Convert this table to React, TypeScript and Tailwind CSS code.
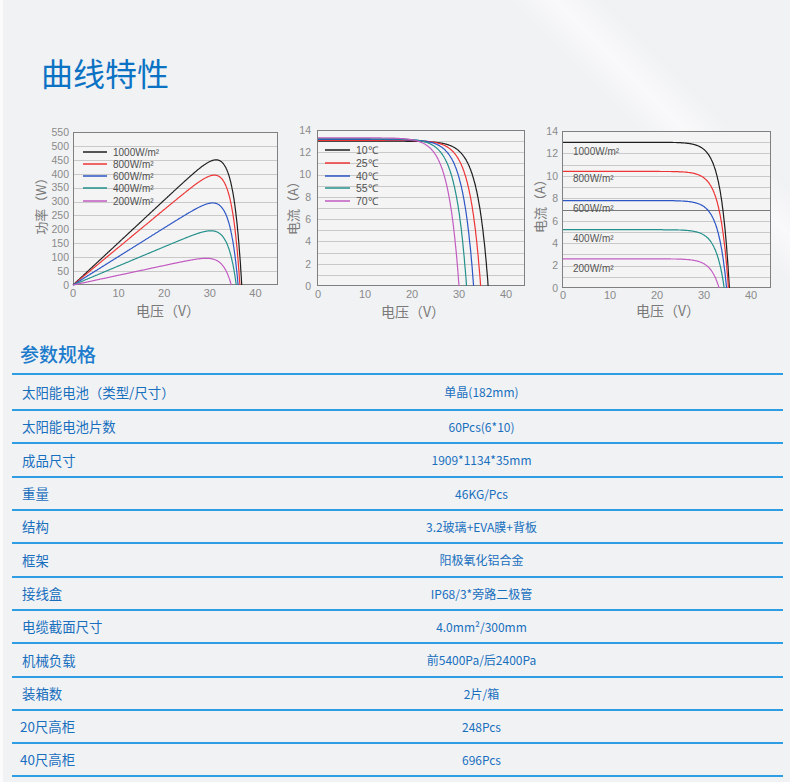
import React from "react";

// Curve characteristics + spec table for a PV module datasheet

const COLORS = ["#1f1f1f", "#ee3434", "#2c56c6", "#23908c", "#c25cc2"];
const LATIN = "'Liberation Sans', Arial, sans-serif";
const CJK = "'Noto Sans CJK SC', 'Noto Sans', sans-serif";

type Pt = [number, number];

function toPath(pts: Pt[]) {
  return pts
    .map(([x, y], i) => `${i ? "L" : "M"}${x.toFixed(1)} ${y.toFixed(1)}`)
    .join("");
}

// diode-like falloff near open-circuit voltage
function ivCurve(isc: number, voc: number, a: number, x0: number, per10: number, y0: number, perA: number) {
  const pts: Pt[] = [];
  const norm = 1 - Math.exp(-voc / a);
  for (let v = 0; v <= voc + 0.001; v += 0.1) {
    const i = (isc * (1 - Math.exp((v - voc) / a))) / norm;
    pts.push([x0 + (v * per10) / 10, y0 - Math.max(i, 0) * perA]);
  }
  return toPath(pts);
}

function pvCurve(peak: number, voc: number, a: number) {
  const raw = (v: number) => v * (1 - Math.exp((v - voc) / a));
  let max = 0;
  for (let v = 0; v <= voc; v += 0.05) max = Math.max(max, raw(v));
  const k = peak / max;
  const pts: Pt[] = [];
  for (let v = 0; v <= voc + 0.001; v += 0.1) {
    const p = Math.max(k * raw(v), 0);
    pts.push([73 + v * 4.56, 285 - (p * 153) / 550]);
  }
  return toPath(pts);
}

function Frame({
  l,
  r,
  t,
  b,
  grid,
  dark,
}: {
  l: number;
  r: number;
  t: number;
  b: number;
  grid: number[];
  dark?: number;
}) {
  return (
    <g shapeRendering="crispEdges">
      <rect x={l} y={t} width={r - l} height={b - t} fill="#f4f4f4" />
      {grid.map((y) => (
        <line
          key={y}
          x1={l}
          x2={r}
          y1={Math.round(y) + 0.5}
          y2={Math.round(y) + 0.5}
          stroke={y === dark ? "#7a7a7a" : "#c9c9c9"}
          strokeWidth={1}
        />
      ))}
      <rect
        x={l + 0.5}
        y={t + 0.5}
        width={r - l - 1}
        height={b - t - 1}
        fill="none"
        stroke="#808080"
        strokeWidth={1}
      />
    </g>
  );
}

function AxisTitles({ x, y, yx, yy, ytext }: { x: number; y: number; yx: number; yy: number; ytext: string }) {
  return (
    <>
      <text x={x} y={y} textAnchor="middle" fontSize={14} fill="#7a7a7a" fontFamily={CJK}>
        电压（V）
      </text>
      <text
        x={yx}
        y={yy + 4.5}
        textAnchor="middle"
        fontSize={13}
        fill="#7a7a7a"
        fontFamily={CJK}
        transform={`rotate(-90 ${yx} ${yy})`}
      >
        {ytext}
      </text>
    </>
  );
}

function XTicks({ x0, per10, y }: { x0: number; per10: number; y: number }) {
  return (
    <>
      {[0, 10, 20, 30, 40].map((v) => (
        <text key={v} x={x0 + (v * per10) / 10} y={y} textAnchor="middle" fontSize={11} fill="#8a8a8a" fontFamily={LATIN}>
          {v}
        </text>
      ))}
    </>
  );
}

function PowerChart() {
  const Y = (p: number) => 285 - (p * 153) / 550;
  const grid = Array.from({ length: 10 }, (_, i) => Y((i + 1) * 50));
  const curves = [
    { peak: 450, voc: 37.0 },
    { peak: 395, voc: 36.6 },
    { peak: 295, voc: 36.2 },
    { peak: 195, voc: 35.8 },
    { peak: 96, voc: 34.7 },
  ];
  const legend = ["1000W/m²", "800W/m²", "600W/m²", "400W/m²", "200W/m²"];
  const rows = [152, 164, 176, 188, 201];
  return (
    <svg width={254} height={200} viewBox="28 120 254 200">
      <Frame l={73} r={278} t={132} b={285} grid={grid} />
      {Array.from({ length: 12 }, (_, i) => i * 50).map((p) => (
        <text key={p} x={69} y={Y(p) + 3.8} textAnchor="end" fontSize={10.5} fill="#8a8a8a" fontFamily={LATIN}>
          {p}
        </text>
      ))}
      <XTicks x0={73} per10={45.6} y={297} />
      <AxisTitles x={168} y={316} yx={41} yy={203} ytext="功率（W）" />
      {curves.map((c, i) => (
        <path key={i} d={pvCurve(c.peak, c.voc, 2.0)} fill="none" stroke={COLORS[i]} strokeWidth={1.2} />
      ))}
      {legend.map((s, i) => (
        <g key={s}>
          <line x1={83} x2={107} y1={rows[i]} y2={rows[i]} stroke={COLORS[i]} strokeWidth={1.5} />
          <text x={113} y={rows[i] + 3.5} fontSize={10} fill="#505050" fontFamily={LATIN}>
            {s}
          </text>
        </g>
      ))}
    </svg>
  );
}

function TempChart() {
  const Y = (a: number) => 286 - a * 11.14;
  const grid = Array.from({ length: 13 }, (_, i) => Y(i + 1));
  const curves = [
    { isc: 13.0, voc: 36.2 },
    { isc: 13.08, voc: 34.6 },
    { isc: 13.15, voc: 33.1 },
    { isc: 13.22, voc: 31.6 },
    { isc: 13.3, voc: 30.0 },
  ];
  const legend = ["10℃", "25℃", "40℃", "55℃", "70℃"];
  const rows = [150, 163, 176, 188, 201];
  return (
    <svg width={247} height={200} viewBox="282 120 247 200">
      <Frame l={317} r={525} t={130} b={286} grid={grid} />
      {[0, 2, 4, 6, 8, 10, 12, 14].map((a) => (
        <text key={a} x={311} y={Y(a) + 3.8} textAnchor="end" fontSize={10.5} fill="#8a8a8a" fontFamily={LATIN}>
          {a}
        </text>
      ))}
      <XTicks x0={318} per10={47} y={298} />
      <AxisTitles x={413} y={317} yx={293} yy={205} ytext="电流（A）" />
      {curves.map((c, i) => (
        <path key={i} d={ivCurve(c.isc, c.voc, 2.3, 318, 47, 286, 11.14)} fill="none" stroke={COLORS[i]} strokeWidth={1.2} />
      ))}
      {legend.map((s, i) => (
        <g key={s}>
          <line x1={325} x2={350} y1={rows[i]} y2={rows[i]} stroke={COLORS[i]} strokeWidth={1.5} />
          <text x={356} y={rows[i] + 3.5} fontSize={10.5} fill="#505050" fontFamily={LATIN}>
            {s}
          </text>
        </g>
      ))}
    </svg>
  );
}

function IrradianceChart() {
  const Y = (a: number) => 288 - a * 11.21;
  const grid = Array.from({ length: 13 }, (_, i) => Y(i + 1));
  const curves = [
    { isc: 13.0, voc: 35.4 },
    { isc: 10.4, voc: 35.2 },
    { isc: 7.8, voc: 34.8 },
    { isc: 5.2, voc: 34.3 },
    { isc: 2.6, voc: 33.2 },
  ];
  const labels = [
    { s: "1000W/m²", y: 151 },
    { s: "800W/m²", y: 178 },
    { s: "600W/m²", y: 208 },
    { s: "400W/m²", y: 238 },
    { s: "200W/m²", y: 268 },
  ];
  return (
    <svg width={258} height={200} viewBox="529 120 258 200">
      <Frame l={562} r={771} t={131} b={288} grid={grid} dark={Y(7)} />
      {[0, 2, 4, 6, 8, 10, 12, 14].map((a) => (
        <text key={a} x={558} y={Y(a) + 3.8} textAnchor="end" fontSize={10.5} fill="#8a8a8a" fontFamily={LATIN}>
          {a}
        </text>
      ))}
      <XTicks x0={563} per10={47} y={298.5} />
      <AxisTitles x={668} y={316} yx={540} yy={203} ytext="电流（A）" />
      {curves.map((c, i) => (
        <path key={i} d={ivCurve(c.isc, c.voc, 1.8, 563, 47, 288, 11.21)} fill="none" stroke={COLORS[i]} strokeWidth={1.2} />
      ))}
      {labels.map((l) => (
        <text key={l.s} x={573} y={l.y + 3.5} fontSize={10} fill="#555555" fontFamily={LATIN}>
          {l.s}
        </text>
      ))}
    </svg>
  );
}

// row heights include the 2px bottom rule
const specs: { label: string; value: string; h: string; tight?: boolean }[] = [
  { label: "太阳能电池（类型/尺寸）", value: "单晶(182mm)", h: "h-[36px]" },
  { label: "太阳能电池片数", value: "60Pcs(6*10)", h: "h-[33px]" },
  { label: "成品尺寸", value: "1909*1134*35mm", h: "h-[34px]" },
  { label: "重量", value: "46KG/Pcs", h: "h-[33px]" },
  { label: "结构", value: "3.2玻璃+EVA膜+背板", h: "h-[33px]" },
  { label: "框架", value: "阳极氧化铝合金", h: "h-[34px]" },
  { label: "接线盒", value: "IP68/3*旁路二极管", h: "h-[33px]" },
  { label: "电缆截面尺寸", value: "4.0mm²/300mm", h: "h-[33px]" },
  { label: "机械负载", value: "前5400Pa/后2400Pa", h: "h-[34px]" },
  { label: "装箱数", value: "2片/箱", h: "h-[33px]" },
  { label: "20尺高柜", value: "248Pcs", h: "h-[33px]", tight: true },
  { label: "40尺高柜", value: "696Pcs", h: "h-[33px]", tight: true },
];

export default function App() {
  return (
    <div className="w-[790px] h-[782px] overflow-hidden border-l-[3px] border-[#fbfbfb] bg-[#f1f2f4] bg-[linear-gradient(45deg,transparent_82%,rgba(255,255,255,0.55)_85%,transparent_88%)] font-['Noto_Sans_CJK_SC',sans-serif]">
      <h1 className="pt-[55px] pl-[38px] text-[32px] leading-[34px] text-[#0c73c4]">曲线特性</h1>

      <div className="mt-[31px] flex pl-[25px]">
        <PowerChart />
        <TempChart />
        <IrradianceChart />
      </div>

      <h2 className="mt-[24px] pl-[17px] text-[19px] leading-[20px] font-medium text-[#1c7bcb]">参数规格</h2>

      <div className="mt-[9px] ml-[9px] w-[771px] border-t-2 border-[#2e9de4]">
        {specs.map((s) => (
          <div key={s.label} className={`flex items-center border-b-2 border-[#2e9de4] ${s.h}`}>
            <div className={`w-[168px] text-[13.4px] text-[#186fbe] ${s.tight ? "pl-[8px]" : "pl-[10px]"}`}>{s.label}</div>
            <div className="flex-1 text-center text-[12px] text-[#186fbe]">{s.value}</div>
          </div>
        ))}
      </div>
    </div>
  );
}
